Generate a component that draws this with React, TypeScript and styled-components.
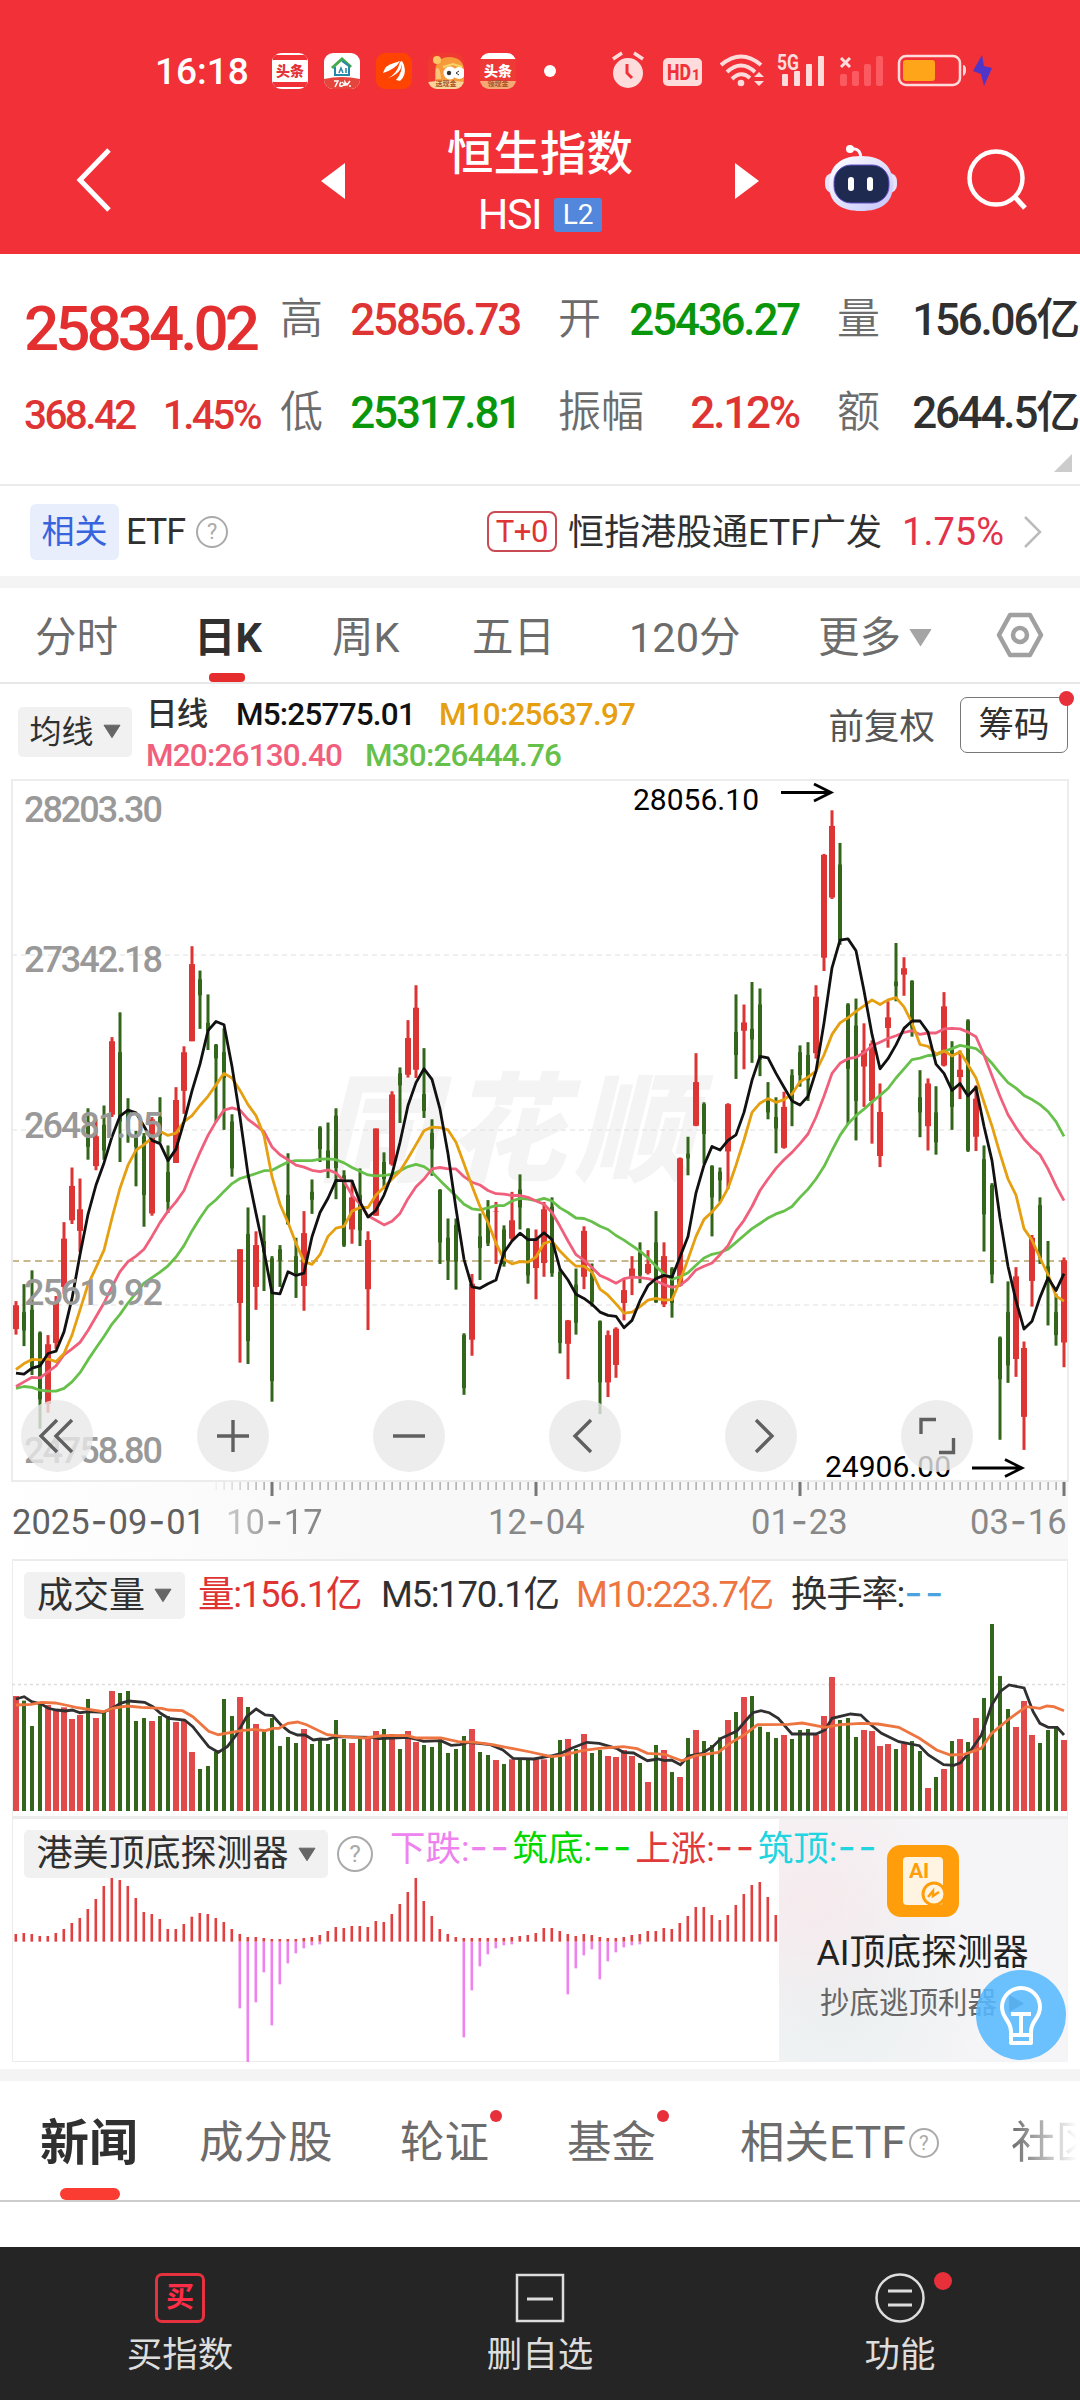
import { Fragment, FunctionComponent, useMemo } from "react";
import styled, { createGlobalStyle } from "styled-components";

const COLOR = {
  brand: "#f23038",
  up: "#df3434",
  down: "#0a960a",
  text: "#303030",
  gray: "#6c6c6c",
  barUp: "#dd3434",
  barDown: "#33661b",
};

type Candle = [up: 0 | 1, high: number, top: number, bottom: number, low: number];

const CANDLES: Candle[] = [
  [1, 1156, 1165, 1217, 1229], [0, 1119, 1180, 1220, 1254], [0, 1089, 1175, 1300, 1317], [0, 1222, 1225, 1370, 1434],
  [1, 1230, 1250, 1380, 1399], [1, 1145, 1158, 1247, 1260], [1, 984, 1020, 1125, 1140], [1, 865, 905, 980, 988],
  [1, 889, 956, 1003, 1049], [0, 736, 765, 820, 848], [1, 760, 797, 862, 871], [0, 730, 772, 828, 848],
  [1, 581, 590, 750, 755], [0, 527, 614, 765, 853], [0, 714, 738, 765, 811], [0, 785, 795, 820, 906],
  [0, 790, 797, 925, 994], [1, 755, 760, 965, 970], [0, 712, 755, 795, 810], [0, 817, 875, 940, 964],
  [1, 690, 718, 855, 855], [1, 601, 614, 698, 748], [1, 383, 422, 590, 590], [0, 436, 455, 490, 563],
  [0, 488, 550, 567, 609], [0, 596, 598, 627, 766], [0, 562, 614, 670, 783], [0, 749, 765, 867, 885],
  [1, 1043, 1043, 1160, 1290], [0, 952, 1010, 1243, 1293], [1, 1004, 1034, 1125, 1175], [0, 969, 1025, 1050, 1134],
  [0, 1058, 1063, 1330, 1375], [0, 1034, 1043, 1068, 1125], [0, 834, 925, 988, 990], [0, 1018, 1058, 1095, 1149],
  [1, 960, 1008, 1123, 1177], [0, 891, 918, 935, 966], [0, 775, 778, 825, 853], [0, 767, 828, 868, 888],
  [0, 736, 752, 866, 934], [0, 871, 882, 1035, 1038], [1, 893, 930, 1000, 1031], [0, 867, 925, 1002, 1036],
  [1, 1004, 1023, 1130, 1219], [1, 780, 780, 970, 970], [0, 832, 853, 890, 912], [1, 699, 706, 858, 861],
  [0, 647, 660, 686, 768], [1, 544, 583, 663, 669], [1, 468, 517, 652, 670], [0, 605, 705, 742, 757],
  [0, 760, 790, 825, 883], [0, 912, 914, 1028, 1075], [0, 976, 1018, 1068, 1110], [0, 976, 990, 1070, 1131],
  [0, 1226, 1230, 1345, 1360], [1, 1097, 1118, 1240, 1275], [0, 965, 1015, 1040, 1110], [0, 936, 958, 1030, 1036],
  [1, 940, 960, 961, 1075], [0, 991, 1000, 1075, 1081], [1, 918, 980, 1020, 1025], [0, 880, 913, 952, 1000],
  [0, 997, 999, 1100, 1118], [1, 1000, 1020, 1084, 1152], [1, 940, 956, 1073, 1103], [0, 930, 950, 1095, 1103],
  [0, 1085, 1092, 1247, 1270], [1, 1197, 1198, 1249, 1326], [0, 1085, 1120, 1203, 1229], [1, 993, 1003, 1103, 1130],
  [0, 1074, 1095, 1158, 1168], [0, 1198, 1200, 1333, 1402], [1, 1220, 1230, 1333, 1365], [1, 1213, 1216, 1295, 1323],
  [1, 1108, 1132, 1160, 1198], [1, 1058, 1085, 1105, 1143], [0, 1028, 1050, 1100, 1117], [1, 1045, 1075, 1095, 1098],
  [0, 960, 1028, 1158, 1160], [1, 1028, 1058, 1163, 1169], [0, 1082, 1085, 1160, 1192], [1, 843, 845, 1122, 1124],
  [0, 798, 835, 845, 882], [1, 616, 679, 774, 775], [0, 723, 727, 792, 857], [0, 860, 862, 930, 1015],
  [0, 865, 874, 893, 940], [1, 725, 727, 830, 912], [0, 488, 570, 620, 672], [1, 510, 549, 567, 651],
  [0, 461, 563, 586, 637], [0, 475, 510, 630, 666], [0, 679, 715, 745, 760], [0, 712, 755, 780, 834],
  [1, 700, 733, 822, 824], [0, 651, 664, 720, 775], [0, 599, 614, 664, 689], [0, 592, 620, 675, 720],
  [1, 468, 493, 616, 628], [1, 182, 184, 408, 437], [1, 87, 121, 277, 280], [0, 158, 205, 370, 380],
  [0, 507, 510, 650, 770], [0, 497, 556, 720, 806], [1, 551, 610, 645, 733], [1, 588, 595, 720, 813],
  [1, 682, 744, 840, 864], [1, 503, 538, 561, 604], [0, 376, 460, 470, 503], [1, 407, 431, 445, 491],
  [0, 457, 459, 560, 580], [0, 653, 712, 745, 799], [1, 671, 682, 775, 828], [0, 688, 745, 810, 837],
  [1, 483, 514, 643, 645], [0, 590, 605, 733, 783], [1, 610, 652, 668, 716], [0, 542, 545, 828, 831],
  [1, 686, 715, 798, 829], [0, 817, 847, 967, 1048], [0, 899, 903, 1098, 1117], [0, 1233, 1236, 1326, 1458],
  [0, 1113, 1180, 1296, 1334], [1, 1082, 1102, 1282, 1321], [1, 1244, 1258, 1408, 1480], [1, 1012, 1018, 1112, 1168],
  [0, 930, 947, 1062, 1075], [0, 1025, 1080, 1110, 1209], [0, 1140, 1180, 1230, 1253], [1, 1061, 1067, 1246, 1300],
];

const AVERAGES = [
  {
    color: "#66c04a",
    values: [
      1346, 1342, 1344, 1350, 1352, 1352, 1346, 1332, 1312, 1284, 1258, 1233, 1206, 1185, 1160, 1138, 1117, 1105, 1093, 1079,
      1060, 1035, 1003, 975, 950, 935, 917, 900, 889, 884, 878, 872, 871, 862, 853, 850, 850, 850, 847, 846, 848, 855, 865,
      873, 881, 883, 882, 880, 872, 863, 858, 863, 875, 893, 910, 927, 945, 955, 957, 953, 948, 948, 938, 932, 934, 937, 932,
      938, 953, 963, 975, 976, 983, 993, 1000, 1013, 1023, 1035, 1047, 1062, 1080, 1097, 1108, 1103, 1094, 1078, 1062, 1054,
      1050, 1043, 1028, 1013, 998, 987, 975, 966, 960, 950, 930, 912, 890, 863, 828, 795, 770, 752, 738, 722, 708, 693, 670,
      650, 630, 627, 621, 620, 612, 606, 599, 602, 606, 620, 638, 660, 680, 692, 708, 717, 728, 743, 765, 797,
    ],
  },
  {
    color: "#f0607c",
    values: [
      1342, 1332, 1322, 1323, 1310, 1297, 1273, 1260, 1246, 1220, 1190, 1160, 1125, 1092, 1070, 1058, 1043, 1015, 985, 960,
      940, 915, 872, 832, 795, 765, 740, 735, 740, 760, 773, 787, 820, 837, 848, 860, 864, 871, 874, 870, 877, 895, 925, 945,
      970, 980, 990, 982, 965, 933, 907, 890, 868, 865, 868, 868, 885, 897, 903, 915, 922, 923, 926, 926, 930, 938, 945, 963,
      993, 1025, 1055, 1067, 1083, 1100, 1108, 1117, 1107, 1104, 1105, 1107, 1112, 1120, 1126, 1122, 1108, 1088, 1080, 1073,
      1055, 1035, 1003, 980, 950, 915, 890, 867, 848, 832, 813, 792, 755, 710, 660, 638, 628, 625, 615, 600, 592, 584, 578,
      571, 567, 575, 572, 572, 563, 562, 563, 570, 580, 620, 665, 710, 750, 778, 803, 822, 837, 868, 905, 937,
    ],
  },
  {
    color: "#e59f10",
    values: [
      1305, 1292, 1283, 1284, 1282, 1288, 1270, 1230, 1175, 1120, 1083, 1045, 975, 910, 860, 827, 815, 800, 786, 795, 790,
      765, 752, 730, 710, 685, 660, 670, 697, 728, 752, 795, 885, 945, 985, 1030, 1070, 1076, 1055, 1015, 997, 993, 960, 952,
      952, 925, 908, 890, 873, 845, 815, 785, 777, 778, 783, 810, 857, 905, 950, 985, 1030, 1065, 1075, 1070, 1071, 1060,
      1030, 1025, 1047, 1065, 1080, 1080, 1093, 1130, 1143, 1162, 1182, 1180, 1168, 1154, 1150, 1154, 1153, 1112, 1065, 1015,
      978, 962, 942, 910, 860, 805, 745, 725, 715, 723, 717, 705, 678, 668, 655, 620, 575, 550, 539, 525, 513, 500, 510, 500,
      495, 515, 550, 597, 601, 618, 611, 622, 613, 641, 670, 723, 775, 835, 890, 925, 998, 1023, 1062, 1098, 1145, 1156,
    ],
  },
  {
    color: "#111",
    values: [
      1313, 1315, 1302, 1297, 1270, 1265, 1223, 1150, 1055, 967, 903, 855, 798, 753, 740, 746, 775, 806, 813, 850, 825, 765,
      698, 640, 567, 547, 554, 645, 755, 880, 965, 1047, 1138, 1140, 1092, 1100, 1095, 1016, 963, 932, 893, 894, 894, 940,
      973, 958, 925, 880, 810, 730, 680, 650, 673, 738, 835, 955, 1065, 1125, 1128, 1118, 1110, 1050, 1025, 1008, 1022, 1022,
      1007, 1022, 1086, 1110, 1141, 1150, 1163, 1180, 1187, 1189, 1214, 1198, 1155, 1122, 1107, 1100, 1104, 1060, 1015, 920,
      860, 819, 827, 806, 794, 745, 675, 623, 626, 660, 690, 720, 729, 710, 655, 550, 430, 370, 367, 393, 480, 575, 650, 628,
      598, 562, 546, 546, 570, 640, 660, 697, 682, 709, 690, 775, 850, 975, 1080, 1155, 1217, 1200, 1148, 1105, 1133, 1096,
    ],
  },
];

// volume bars: top edge, three units per pixel, base line at 633
const VOLUMES = [
  288, 302, 378, 310, 315, 328, 322, 357, 345, 297, 354, 338, 273, 279, 273, 363, 354, 363, 348, 348, 366, 362, 456, 507,
  498, 455, 297, 348, 291, 321, 372, 395, 354, 438, 411, 429, 387, 432, 415, 432, 360, 417, 429, 414, 412, 393, 387, 402,
  447, 393, 426, 435, 441, 412, 459, 447, 408, 387, 456, 465, 480, 492, 478, 475, 480, 478, 478, 465, 420, 417, 447, 402,
  459, 450, 468, 471, 450, 468, 489, 546, 435, 450, 516, 531, 414, 390, 423, 435, 412, 360, 336, 291, 288, 380, 396, 414,
  405, 417, 390, 387, 405, 348, 231, 360, 354, 411, 390, 393, 438, 432, 447, 430, 423, 453, 564, 531, 507, 423, 417, 426,
  354, 294, 72, 228, 327, 381, 303, 405, 429, 390, 384, 420,
];

const VOLUME_M5 =
  "23,297 35,290 46,305 60,312 70,325 82,330 95,333 105,330 116,338 128,335 150,337 163,325 175,310 187,303 210,307 222,320 233,340 245,355 268,360 280,380 303,440 317,457 330,440 343,405 358,350 372,327 385,345 396,347 408,375 420,395 432,405 443,405 455,420 465,417 475,418 488,410 540,412 550,416 570,414 592,412 605,418 615,424 640,422 655,436 668,434 680,427 712,434 730,450 745,475 775,477 800,468 815,460 830,445 852,427 870,430 895,445 905,457 920,459 940,482 955,477 965,482 975,480 988,494 1000,468 1020,460 1035,440 1047,415 1070,393 1085,357 1093,338 1105,332 1117,338 1130,355 1150,402 1185,402 1198,390 1208,355 1235,342 1250,345 1265,375 1280,400 1305,425 1335,437 1348,465 1370,494 1385,496 1395,488 1410,450 1425,405 1440,315 1452,275 1465,255 1487,264 1500,335 1510,370 1522,382 1535,382 1545,405";
const VOLUME_M10 =
  "23,315 45,313 60,307 80,309 95,315 110,322 150,335 165,324 185,318 205,322 235,325 245,330 265,332 280,350 303,394 317,404 350,392 370,388 385,392 396,385 405,385 418,370 432,366 445,374 475,404 500,410 530,414 555,407 590,406 605,414 640,414 665,425 690,427 715,434 745,446 770,456 800,470 815,467 845,452 870,445 905,440 925,446 940,460 965,463 990,482 1010,467 1043,457 1060,430 1080,405 1100,374 1145,373 1165,369 1198,382 1220,374 1250,370 1275,372 1305,382 1335,415 1360,450 1380,465 1400,463 1425,445 1440,400 1465,357 1490,320 1510,325 1520,318 1530,320 1545,332";

const DETECTOR_UP = [
  402, 399, 402, 408, 408, 399, 387, 369, 354, 327, 297, 258, 212, 240, 258, 294, 336, 342, 357, 387, 387, 372, 350, 339,
  342, 354, 366, 387, 402, 411, 411, 414, 417, 417, 417, 417, 414, 411, 405, 393, 381, 384, 378, 378, 381, 363, 366, 342,
  312, 276, 234, 303, 348, 387, 402, 411, 414, 414, 414, 414, 414, 414, 411, 408, 405, 399, 384, 384, 393, 402, 408, 402,
  405, 411, 414, 414, 411, 405, 402, 393, 393, 384, 387, 369, 348, 321, 321, 345, 360, 345, 315, 282, 255, 246, 291, 345,
];
const DETECTOR_DOWN: [number, number[]][] = [
  [28, [624, 786, 606, 516, 675, 552, 489, 459, 444, 435, 432]],
  [56, [711, 570, 498, 462, 444, 435, 432]],
  [69, [582, 504, 465, 447, 537, 483, 456, 441, 435, 432]],
];

const STEP = 8;
const candleX = (index: number) => 4 + index * STEP;
const priceY = (value: number) => (value - 21) / 2.178;
const scalePoints = (points: string) =>
  points
    .split(" ")
    .map((point) => {
      const [x, y] = point.split(",").map(Number);
      return `${(x / 1.452 - 12).toFixed(1)},${(y / 3 + 41).toFixed(1)}`;
    })
    .join(" ");

const PriceChart: FunctionComponent = () => {
  const lines = useMemo(
    () =>
      AVERAGES.map(({ color, values }) => (
        <polyline
          key={color}
          points={values.map((v, i) => `${candleX(i)},${priceY(v).toFixed(1)}`).join(" ")}
          fill="none"
          stroke={color}
          strokeWidth={2.8}
          strokeLinejoin="round"
        />
      )),
    []
  );

  return (
    <PlotSvg width="1056" height="701" viewBox="0 0 1056 701">
      <Watermark x="306" y="392" textLength="375">同花顺</Watermark>
      {[175, 350, 525].map((y) => (
        <line key={y} x1="0" x2="1056" y1={y} y2={y} stroke="#e0e0e0" strokeDasharray="5 4" />
      ))}
      <line x1="0" x2="1056" y1="481" y2="481" stroke="#b9a06a" strokeWidth="1.6" strokeDasharray="7 4.5" />
      {CANDLES.map(([up, high, top, bottom, low], i) => (
        <g key={i} fill={up ? COLOR.barUp : COLOR.barDown}>
          <rect x={candleX(i) - 1.5} y={priceY(high)} width="3" height={priceY(low) - priceY(high)} />
          <rect
            x={candleX(i) - (up ? 3 : 2)}
            y={priceY(top)}
            width={up ? 6 : 4}
            height={priceY(bottom) - priceY(top)}
          />
        </g>
      ))}
      {lines}
      <ScaleText x="12" y="42" textLength="139">28203.30</ScaleText>
      <ScaleText x="12" y="192" textLength="139">27342.18</ScaleText>
      <ScaleText x="12" y="358" textLength="139">26481.05</ScaleText>
      <ScaleText x="12" y="525" textLength="139">25619.92</ScaleText>
      <ScaleText x="12" y="683" textLength="139">24758.80</ScaleText>
      <MarkText x="621" y="30" textLength="126">28056.10</MarkText>
      <MarkText x="813" y="697" textLength="126">24906.00</MarkText>
      <g fill="none" stroke="#000" strokeWidth="2.8">
        <path d="M769 12.500H819M802 4L819 12.500L802 21" />
        <path d="M960 688H1010M993 679.500L1010 688L993 696.500" />
      </g>
    </PlotSvg>
  );
};

const VolumeChart: FunctionComponent = () => (
  <PanelSvg width="1056" height="258" viewBox="0 0 1056 258">
    <line x1="0" x2="1056" y1="125.500" y2="125.500" stroke="#ddd" strokeWidth="1.5" strokeDasharray="3 3" />
    {VOLUMES.map((top, i) => {
      const up = CANDLES[i][0];
      return (
        <rect
          key={i}
          x={candleX(i) - (up ? 3 : 2)}
          y={top / 3 + 41}
          width={up ? 6 : 4}
          height={(633 - top) / 3}
          fill={up ? "#e04a4a" : COLOR.barDown}
        />
      );
    })}
    <polyline points={scalePoints(VOLUME_M5)} fill="none" stroke="#303030" strokeWidth="2.8" />
    <polyline points={scalePoints(VOLUME_M10)} fill="none" stroke="#ee7440" strokeWidth="2.8" />
  </PanelSvg>
);

const DetectorChart: FunctionComponent = () => (
  <PanelSvg width="768" height="245" viewBox="0 0 768 245">
    {DETECTOR_UP.map((top, i) => (
      <rect key={i} x={candleX(i) - 1.5} y={top / 3 - 17} width="2.6" height={(425 - top) / 3} fill="#e04040" />
    ))}
    {DETECTOR_DOWN.map(([start, values]) =>
      values.map((bottom, i) => (
        <rect key={start + i} x={candleX(start + i) - 1.5} y="125" width="2.6" height={(bottom - 425) / 3} fill="#ee82ee" />
      ))
    )}
  </PanelSvg>
);

const TimeAxis: FunctionComponent = () => (
  <Axis>
    <svg width="1060" height="16" viewBox="0 0 1060 16">
      {Array.from({ length: 107 }, (_, i) => {
        const x = 204 + i * STEP;
        const major = (x - 260) % 264 === 0;
        return (
          <rect
            key={x}
            x={major ? x - 1.5 : x - 0.5}
            y="0"
            width={major ? 3 : 1.2}
            height={major ? 15 : 9}
            fill={major ? "#777" : "#999"}
            opacity={Math.min(1, (i + 1) / 7)}
          />
        );
      })}
    </svg>
    <AxisLabels>
      <StartDate><Dashed text="2025-09-01" /></StartDate>
      <FadedDate><Dashed text="10-17" /></FadedDate>
      <span><Dashed text="12-04" /></span>
      <span><Dashed text="01-23" /></span>
      <span><Dashed text="03-16" /></span>
    </AxisLabels>
  </Axis>
);

const Dashed: FunctionComponent<{ text: string }> = ({ text }) => (
  <>
    {text.split("-").map((part, i) => (
      <Fragment key={i}>
        {i > 0 && <Dash>-</Dash>}
        {part}
      </Fragment>
    ))}
  </>
);

const Caret: FunctionComponent<{ size?: number; color?: string }> = ({ size = 18, color = "#666" }) => (
  <svg width={size} height={size * 0.8} viewBox="0 0 18 14">
    <path d="M1 1H17L9 13.500Z" fill={color} stroke={color} strokeLinejoin="round" />
  </svg>
);

const Help: FunctionComponent<{ size: number }> = ({ size }) => <HelpMark $size={size}>?</HelpMark>;

const AppIcons: FunctionComponent = () => (
  <IconRow>
    <AppIcon $bg="#f23038">
      <TileBand>头条</TileBand>
    </AppIcon>
    <AppIcon $bg="#fff">
      <svg width="36" height="36" viewBox="0 0 36 36" fill="none">
        <path d="M8 15L18 6L27 14" stroke="#45a84a" strokeWidth="3" />
        <path d="M11 14V22H25V13L18 8" stroke="#2389a8" strokeWidth="2" />
        <path d="M15 20L17 15L19 20M22 15V20" stroke="#2389a8" strokeWidth="1.500" />
        <path d="M0 26Q18 22 36 26V36H0Z" fill="#e4453c" />
        <path d="M10 28H14L11 34M17 29Q14 34 18 33T18 29M21 33V29L23 32L26 28M25 33H27" stroke="#fff" strokeWidth="1.500" />
      </svg>
    </AppIcon>
    <AppIcon $bg="#fe4400">
      <svg width="36" height="36" viewBox="0 0 36 36" fill="#fff">
        <path d="M7 20Q9 12 18 10L24 8Q20 16 7 20Z" />
        <path d="M12 25Q21 21 24 9L26 8Q27 20 12 25Z" />
        <path d="M20 27Q27 19 26 8L28 12Q31 22 24 28Z" />
      </svg>
    </AppIcon>
    <AppIcon $bg="#ef3a31">
      <svg width="36" height="36" viewBox="0 0 36 36">
        <path d="M7 36V20Q7 4 22 4Q36 5 36 18V36Z" fill="#f79a3c" />
        <circle cx="9" cy="7" r="4" fill="#fbc766" />
        <path d="M8 16Q12 12 13 26H8Z" fill="#fcc67a" />
        <path d="M15 14L25 11L34 14" stroke="#f7d56a" strokeWidth="2" fill="none" />
        <circle cx="22" cy="20" r="6.500" fill="#fff" />
        <circle cx="31" cy="20" r="6" fill="#fff" />
        <circle cx="21" cy="20" r="2.200" fill="#333" />
        <path d="M31 18L28 20L31 22" stroke="#333" fill="none" />
        <path d="M0 29Q18 26 36 29V36H0Z" fill="#f9d59a" />
      </svg>
      <TileFoot>送现金</TileFoot>
    </AppIcon>
    <AppIcon $bg="#ee3a37">
      <TileCap />
      <TileWord>头条</TileWord>
      <TileFoot $bg="#f5a873">领现金</TileFoot>
    </AppIcon>
    <NoticeDot />
  </IconRow>
);

const SystemIcons: FunctionComponent = () => (
  <svg width="386" height="42" viewBox="0 0 386 42" fill="#ffdcdc">
    <circle cx="17" cy="23" r="15" />
    <path d="M2 9L11 3M23 3L32 9" stroke="#ffdcdc" strokeWidth="3.500" />
    <path d="M16 14V23L21 28" stroke={COLOR.brand} strokeWidth="3" fill="none" />
    <rect x="52" y="8" width="39" height="28" rx="5" />
    <HdText x="56" y="30" fontSize="22" textLength="24" lengthAdjust="spacingAndGlyphs">HD</HdText>
    <HdText x="81" y="30" fontSize="14">1</HdText>
    <g fill="none" stroke="#ffdcdc" strokeWidth="4">
      <path d="M110 15Q130 -2 150 15" />
      <path d="M116 22Q130 9 144 22" />
      <path d="M121 29Q130 20 139 28" />
    </g>
    <circle cx="130" cy="33" r="3.300" />
    <path d="M143 27L148 22L153 27ZM143 31L148 36L153 31Z" />
    <NetText x="166" y="20" textLength="22" lengthAdjust="spacingAndGlyphs">5G</NetText>
    <rect x="171" y="24" width="6" height="12" rx="1" />
    <rect x="183" y="21" width="6" height="15" rx="1" />
    <rect x="195" y="14" width="6" height="22" rx="1" />
    <rect x="207" y="6" width="6" height="30" rx="1" />
    <path d="M230 8L239 17M239 8L230 17" stroke="#ffdcdc" strokeWidth="3" />
    <g fill="#fa5a60">
      <rect x="229" y="24" width="7" height="12" rx="2" />
      <rect x="241" y="21" width="7" height="15" rx="2" />
      <rect x="253" y="14" width="7" height="22" rx="2" />
      <rect x="265" y="6" width="7" height="30" rx="2" />
    </g>
    <rect x="288" y="6" width="61" height="29" rx="7" fill="none" stroke="#ffdcdc" strokeWidth="2.500" />
    <rect x="292" y="10" width="32" height="21" rx="3" fill="#ffa51a" />
    <path d="M352 15Q355 15 355 20T352 26Z" />
    <path d="M371 5L362 21L370 24L373 36L381 18L373 16Z" fill="#5036c8" />
  </svg>
);

const Robot: FunctionComponent = () => (
  <svg width="74" height="70" viewBox="0 0 74 70">
    <defs>
      <linearGradient id="shell" x1="0" y1="0" x2="1" y2="1">
        <stop offset="0" stopColor="#ffffff" />
        <stop offset="1" stopColor="#c5c4fa" />
      </linearGradient>
    </defs>
    <path d="M27 6Q37 4 37 17" fill="none" stroke="#f8f6ff" strokeWidth="3" />
    <circle cx="26" cy="6" r="4" fill="#fff" />
    <rect x="1" y="30" width="72" height="20" rx="8" fill="#e6e2fb" />
    <path d="M37 13C61 13 69 26 69 42C69 60 57 68 37 68S5 60 5 42C5 26 13 13 37 13Z" fill="url(#shell)" />
    <rect x="10" y="22" width="55" height="38" rx="17" fill="#1f2a50" stroke="#6450c8" />
    <rect x="24" y="34" width="6" height="14" rx="3" fill="#fff" />
    <rect x="43" y="34" width="6" height="14" rx="3" fill="#fff" />
  </svg>
);

const App: FunctionComponent = () => (
  <Screen>
    <GlobalStyle />
    <Header>
      <StatusBar>
        <Clock>16:18</Clock>
        <AppIcons />
        <SystemIcons />
      </StatusBar>
      <NavBar>
        <svg width="36" height="66" viewBox="0 0 36 66">
          <path d="M33 3L4 33L33 63" fill="none" stroke="#fff" strokeWidth="5" />
        </svg>
        <TitleGroup>
          <svg width="24" height="36" viewBox="0 0 24 36"><path d="M24 0V36L0 18Z" fill="#fff" /></svg>
          <Title>
            <Name>恒生指数</Name>
            <Code>HSI<Level>L2</Level></Code>
          </Title>
          <svg width="24" height="36" viewBox="0 0 24 36"><path d="M0 0V36L24 18Z" fill="#fff" /></svg>
        </TitleGroup>
        <Robot />
        <svg width="62" height="62" viewBox="0 0 62 62">
          <circle cx="30" cy="29" r="26.500" fill="none" stroke="#fff" strokeWidth="4.500" />
          <path d="M48 47L59 59" stroke="#fff" strokeWidth="5" />
        </svg>
      </NavBar>
    </Header>

    <Quote>
      <LastPrice>25834.02</LastPrice>
      <Pair><Label>高</Label><Value $color={COLOR.up}>25856.73</Value></Pair>
      <Pair><Label>开</Label><Value $color={COLOR.down}>25436.27</Value></Pair>
      <Pair><Label>量</Label><Value>156.06亿</Value></Pair>
      <Change><span>368.42</span><span>1.45%</span></Change>
      <Pair><Label>低</Label><Value $color={COLOR.down}>25317.81</Value></Pair>
      <Pair><Label>振幅</Label><Value $color={COLOR.up}>2.12%</Value></Pair>
      <Pair><Label>额</Label><Value>2644.5亿</Value></Pair>
      <Corner />
    </Quote>

    <EtfRow>
      <RelatedTag>相关</RelatedTag>
      <EtfWord>ETF</EtfWord>
      <Help size={32} />
      <TradeTag>T+0</TradeTag>
      <FundName>恒指港股通ETF广发</FundName>
      <FundChange>1.75%</FundChange>
      <svg width="22" height="36" viewBox="0 0 22 36">
        <path d="M3 3L18 18L3 33" fill="none" stroke="#bbb" strokeWidth="2.500" />
      </svg>
    </EtfRow>
    <Gap $height={12} />

    <PeriodTabs>
      <Period>分时</Period>
      <Period $active>日K</Period>
      <Period>周K</Period>
      <Period>五日</Period>
      <Period>120分</Period>
      <Period>更多<Caret size={23} color="#a5a5a5" /></Period>
      <svg width="48" height="46" viewBox="0 0 48 46" fill="none" stroke="#a0a0a0" strokeWidth="4.500">
        <path d="M14 3H34L45 23L34 43H14L3 23Z" strokeLinejoin="round" />
        <circle cx="24" cy="23" r="7" />
      </svg>
    </PeriodTabs>

    <LegendRow>
      <Picker $width={114} $height={50} $size={32}>均线<Caret /></Picker>
      <Legend>
        <LegendItem $width={90} $color="#303030">日线</LegendItem>
        <LegendItem $width={203} $color="#111">M5:25775.01</LegendItem>
        <LegendItem $color="#e59f10">M10:25637.97</LegendItem>
        <LegendBreak />
        <LegendItem $width={219} $color="#f0607c">M20:26130.40</LegendItem>
        <LegendItem $color="#66c04a">M30:26444.76</LegendItem>
      </Legend>
      <Adjust>前复权</Adjust>
      <Chips>筹码<Badge $top={-7} $right={-7} $size={15} /></Chips>
    </LegendRow>

    <Plot>
      <PriceChart />
      <Controls>
        <Control><path d="M36 20L20 36L36 52M51 20L35 36L51 52" /></Control>
        <Control><path d="M20 36H52M36 20V52" /></Control>
        <Control><path d="M20 36H52" /></Control>
        <Control><path d="M42 20L26 36L42 52" /></Control>
        <Control><path d="M31 20L47 36L31 52" /></Control>
        <Control><path d="M20 34V19.500H35M38 52.500H52.500V38" /></Control>
      </Controls>
    </Plot>
    <TimeAxis />

    <VolumePanel>
      <VolumeChart />
      <PanelHead $top={11}>
        <Picker $width={161} $height={47} $size={36}>成交量<Caret /></Picker>
        <Metric $left={13} $width={183} $color={COLOR.up}>量:156.1亿</Metric>
        <Metric $width={195} $color="#303030">M5:170.1亿</Metric>
        <Metric $width={215} $color="#ee7440">M10:223.7亿</Metric>
        <Metric $color="#303030">换手率:<Blank $color="#4aa3e0">--</Blank></Metric>
      </PanelHead>
    </VolumePanel>

    <DetectorPanel>
      <DetectorChart />
      <Promo>
        <svg width="72" height="72" viewBox="0 0 72 72">
          <rect width="72" height="72" rx="14" fill="#ff9d0a" />
          <rect x="16" y="12" width="40" height="48" rx="4" fill="#fff4e2" />
          <AiText x="22" y="33">AI</AiText>
          <circle cx="47" cy="49" r="11" fill="#fff4e2" stroke="#ff9d0a" strokeWidth="3" />
          <path d="M41 52L46 46V51L52 47" fill="none" stroke="#ff9d0a" strokeWidth="2.500" />
        </svg>
        <PromoTitle>AI顶底探测器</PromoTitle>
        <PromoNote>抄底逃顶利器<span>▶</span></PromoNote>
      </Promo>
      <PanelHead $top={11}>
        <Picker $width={304} $height={48} $size={36}>港美顶底探测器<Caret /></Picker>
        <HelpSlot><Help size={36} /></HelpSlot>
        <Signal $color="#ee82ee">下跌:<Blank>--</Blank></Signal>
        <Signal $color="#00d800">筑底:<Blank>--</Blank></Signal>
        <Signal $color="#e03a3a">上涨:<Blank>--</Blank></Signal>
        <Signal $color="#22d3e0">筑顶:<Blank>--</Blank></Signal>
      </PanelHead>
      <TipBubble>
        <svg width="90" height="90" viewBox="0 0 90 90" fill="none" stroke="#fff" strokeWidth="4">
          <path d="M35 62C35 50 26 49 26 37A19 19 0 0 1 64 37C64 49 55 50 55 62V73H35Z" strokeLinejoin="round" />
          <path d="M35 65H55M45 64V44M35 44H55" />
        </svg>
      </TipBubble>
    </DetectorPanel>
    <Gap $height={12} />

    <NewsTabs>
      <NewsTab $width={159} $active>新闻</NewsTab>
      <NewsTab $width={201}>成分股</NewsTab>
      <NewsTab $width={167}><Marked>轮证<Badge $top={-11} $right={-13} $size={12} /></Marked></NewsTab>
      <NewsTab $width={173}><Marked>基金<Badge $top={-11} $right={-13} $size={12} /></Marked></NewsTab>
      <NewsTab $width={271}>相关ETF<Help size={30} /></NewsTab>
      <NewsTab $faded $width={88}>社区</NewsTab>
    </NewsTabs>
    <NewsBody />

    <BottomBar>
      <Action>
        <BuyIcon>买</BuyIcon>
        买指数
      </Action>
      <Action>
        <svg width="50" height="50" viewBox="0 0 50 50" fill="none" stroke="#ddd" strokeWidth="2.500">
          <rect x="2" y="2" width="46" height="46" />
          <path d="M12 26H38" strokeWidth="3" />
        </svg>
        删自选
      </Action>
      <Action>
        <Marked>
          <svg width="52" height="50" viewBox="0 0 52 50" fill="none" stroke="#ddd" strokeWidth="2.500">
            <circle cx="26" cy="25" r="23.500" />
            <path d="M14 18H38M14 32H38" strokeWidth="3" />
          </svg>
          <Badge $top={-1} $right={-26} $size={18} />
        </Marked>
        功能
      </Action>
    </BottomBar>
  </Screen>
);

const GlobalStyle = createGlobalStyle`
  body {
    margin: 0;
    background: #fff;
  }
  * {
    box-sizing: border-box;
  }
  svg {
    display: block;
    flex: none;
  }
`;

const Screen = styled.div`
  width: 1080px;
  height: 2400px;
  overflow: hidden;
  display: flex;
  flex-direction: column;
  background: #fff;
  color: ${COLOR.text};
  font-family: Roboto, "Noto Sans CJK SC", sans-serif;
  line-height: 1;
  white-space: nowrap;
`;

const Header = styled.header`
  height: 254px;
  flex: none;
  padding-top: 50px;
  background: ${COLOR.brand};
  color: #fff;
`;

const StatusBar = styled.div`
  display: flex;
  align-items: center;
  height: 42px;
  padding-left: 155px;
`;

const Clock = styled.span`
  width: 117px;
  font-size: 37px;
  font-weight: 500;
`;

const IconRow = styled.div`
  display: flex;
  align-items: center;
  gap: 16px;
  width: 339px;
`;

const AppIcon = styled.div<{ $bg: string }>`
  position: relative;
  display: flex;
  align-items: center;
  justify-content: center;
  width: 36px;
  height: 36px;
  border-radius: 9px;
  overflow: hidden;
  background: ${({ $bg }) => $bg};
`;

const TileBand = styled.span`
  display: flex;
  align-items: center;
  height: 22px;
  padding: 0 4px;
  border-radius: 2px;
  background: #fff;
  color: #e2333a;
  font-size: 14px;
  font-weight: 900;
  box-shadow: 0 -6px 0 -1px #f23038, 0 -7px 0 0 #fff, 0 6px 0 -1px #f23038, 0 7px 0 0 #fff;
`;

const TileWord = styled.span`
  font-size: 14px;
  font-weight: 900;
`;

const TileCap = styled.span`
  position: absolute;
  top: 0;
  left: 0;
  width: 36px;
  height: 6px;
  background: #fff;
`;

const TileFoot = styled.span<{ $bg?: string }>`
  position: absolute;
  left: 0;
  bottom: 0;
  width: 36px;
  height: 8px;
  background: ${({ $bg = "transparent" }) => $bg};
  color: #a5542a;
  font-size: 7px;
  font-weight: 700;
  text-align: center;
`;

const NoticeDot = styled.span`
  width: 12px;
  height: 12px;
  margin-left: 12px;
  border-radius: 50%;
  background: #fff;
`;

const HdText = styled.text`
  font-weight: 800;
  fill: ${COLOR.brand};
`;

const NetText = styled.text`
  font-size: 22px;
  font-weight: 700;
`;

const NavBar = styled.div`
  display: flex;
  align-items: center;
  height: 162px;
  padding: 13px 0 0 76px;
`;

const TitleGroup = styled.div`
  display: flex;
  align-items: center;
  justify-content: space-between;
  width: 438px;
  margin: 3px 65px 0 209px;

  & + svg {
    margin: -3px 68px 0 0;
  }
`;

const Title = styled.div`
  display: flex;
  flex-direction: column;
  align-items: center;
  margin-top: 5px;
`;

const Name = styled.h1`
  margin: 0;
  font-size: 46.5px;
  font-weight: 500;
`;

const Code = styled.div`
  display: flex;
  align-items: center;
  gap: 13px;
  margin-top: 16px;
  font-size: 43px;
  letter-spacing: -1.5px;
`;

const Level = styled.span`
  display: flex;
  align-items: center;
  justify-content: center;
  width: 48px;
  height: 34px;
  border-radius: 3px;
  background: #5387dc;
  font-size: 28px;
  letter-spacing: 0;
`;

const Quote = styled.section`
  position: relative;
  display: grid;
  grid-template-columns: 218px 240px 241px 241px;
  grid-template-rows: 93px 93px;
  column-gap: 38px;
  align-items: center;
  height: 232px;
  flex: none;
  padding: 19px 0 0 24px;
  border-bottom: 2px solid #ebebeb;
`;

const LastPrice = styled.strong`
  padding-top: 18px;
  color: #e32f2f;
  font-size: 62px;
  font-weight: 500;
  letter-spacing: -4px;
`;

const Change = styled.div`
  display: flex;
  gap: 28px;
  padding-top: 6px;
  color: ${COLOR.up};
  font-size: 40.5px;
  font-weight: 500;
  letter-spacing: -2.6px;
`;

const Pair = styled.div`
  display: flex;
  align-items: center;
  justify-content: space-between;
`;

const Label = styled.span`
  color: ${COLOR.gray};
  font-size: 43px;
  font-weight: 350;
`;

const Value = styled.span<{ $color?: string }>`
  color: ${({ $color = COLOR.text }) => $color};
  font-size: 44px;
  font-weight: 500;
  letter-spacing: -2.2px;
`;

const Corner = styled.i`
  position: absolute;
  right: 8px;
  bottom: 12px;
  border-left: 18px solid transparent;
  border-bottom: 18px solid #ccc;
`;

const EtfRow = styled.section`
  display: flex;
  align-items: center;
  height: 90px;
  flex: none;
  padding: 1px 36px 0 30px;
`;

const RelatedTag = styled.span`
  display: flex;
  align-items: center;
  justify-content: center;
  width: 89px;
  height: 56px;
  margin-right: 7px;
  border-radius: 6px;
  background: #e8eefc;
  color: #3763dc;
  font-size: 33px;
`;

const EtfWord = styled.span`
  margin: 1px 11px 0 0;
  font-size: 36px;
  letter-spacing: -1px;
`;

const HelpMark = styled.span<{ $size: number }>`
  display: inline-flex;
  align-items: center;
  justify-content: center;
  width: ${({ $size }) => $size}px;
  height: ${({ $size }) => $size}px;
  border: 2px solid #aaa;
  border-radius: 50%;
  color: #aaa;
  font-size: ${({ $size }) => $size * 0.68}px;
`;

const TradeTag = styled.span`
  display: flex;
  align-items: center;
  justify-content: center;
  width: 70px;
  height: 41px;
  margin: 0 11px 0 auto;
  border: 2px solid #c94a52;
  border-radius: 8px;
  color: ${COLOR.up};
  font-size: 31px;
  letter-spacing: -0.5px;
`;

const FundName = styled.span`
  margin-top: 3px;
  font-size: 36px;
`;

const FundChange = styled.span`
  margin: 1px 18px 0 20px;
  color: #e2334a;
  font-size: 38px;
`;

const Gap = styled.div<{ $height: number }>`
  height: ${({ $height }) => $height}px;
  flex: none;
  background: #f4f4f4;
`;

const PeriodTabs = styled.nav`
  display: grid;
  grid-template-columns: 159px 138px 140px 157px 189px 178px 48px;
  align-items: center;
  height: 96px;
  flex: none;
  padding-left: 35px;
  border-bottom: 2px solid #e8e8e8;
`;

const Period = styled.span<{ $active?: boolean }>`
  position: relative;
  display: flex;
  align-items: center;
  gap: 8px;
  width: max-content;
  height: 100%;
  padding-top: 5px;
  color: ${({ $active }) => ($active ? COLOR.text : COLOR.gray)};
  font-size: 41.5px;
  font-weight: ${({ $active }) => ($active ? 700 : 400)};

  &::after {
    content: "";
    display: ${({ $active }) => ($active ? "block" : "none")};
    position: absolute;
    left: calc(50% - 19px);
    bottom: 0;
    width: 36px;
    height: 9px;
    border-radius: 4px;
    background: #e52d2d;
  }
`;

const LegendRow = styled.section`
  display: flex;
  align-items: center;
  height: 95px;
  flex: none;
  padding: 0 12px 0 18px;
`;

const Picker = styled.div<{ $width: number; $height: number; $size: number }>`
  display: flex;
  align-items: center;
  justify-content: center;
  gap: 9px;
  flex: none;
  width: ${({ $width }) => $width}px;
  height: ${({ $height }) => $height}px;
  border-radius: 5px;
  background: #f1f1f1;
  font-size: ${({ $size }) => $size}px;
`;

const Legend = styled.div`
  display: flex;
  flex-wrap: wrap;
  width: 510px;
  margin: 6px 0 0 14px;
  line-height: 41px;
`;

const LegendItem = styled.span<{ $color: string; $width?: number }>`
  width: ${({ $width }) => ($width ? `${$width}px` : "auto")};
  color: ${({ $color }) => $color};
  font-size: 31.5px;
  font-weight: 500;
  letter-spacing: -0.8px;
`;

const LegendBreak = styled.i`
  flex-basis: 100%;
  height: 0;
`;

const Adjust = styled.span`
  margin: -7px 25px 0 auto;
  color: #555;
  font-size: 35.5px;
`;

const Chips = styled.span`
  position: relative;
  display: flex;
  align-items: center;
  justify-content: center;
  width: 108px;
  height: 56px;
  padding-top: 2px;
  margin-top: -14px;
  border: 1.5px solid #777;
  border-radius: 7px;
  font-size: 35.5px;
`;

const Badge = styled.i<{ $top: number; $right: number; $size: number }>`
  position: absolute;
  top: ${({ $top }) => $top}px;
  right: ${({ $right }) => $right}px;
  width: ${({ $size }) => $size}px;
  height: ${({ $size }) => $size}px;
  border-radius: 50%;
  background: #e8303a;
`;

const Plot = styled.section`
  position: relative;
  height: 701px;
  flex: none;
  margin: 1px 12px 0;
  outline: 2px solid #ececec;
  outline-offset: -1px;
`;

const PlotSvg = styled.svg`
  overflow: visible;
`;

const Watermark = styled.text`
  fill: #f4f4f4;
  font-size: 118px;
  font-style: italic;
  font-weight: 900;
`;

const ScaleText = styled.text`
  fill: #999;
  font-size: 36px;
  font-weight: 500;
`;

const MarkText = styled.text`
  fill: #000;
  font-size: 30px;
`;

const Controls = styled.div`
  position: absolute;
  left: 9px;
  bottom: 9px;
  display: flex;
  justify-content: space-between;
  width: 952px;
`;

const Control = styled.svg.attrs({ viewBox: "0 0 72 72" })`
  width: 72px;
  height: 72px;
  border-radius: 50%;
  background: rgba(232, 232, 232, 0.8);
  fill: none;
  stroke: #606060;
  stroke-width: 3.4;
`;

const Axis = styled.div`
  height: 78px;
  flex: none;
  padding-left: 12px;
  margin-right: 12px;
  background: linear-gradient(90deg, #fff, #f8f8f8 35%);
`;

const AxisLabels = styled.div`
  display: grid;
  grid-template-columns: 214px 262px 263px 219px auto;
  margin-top: 8px;
  color: #888;
  font-size: 34.5px;
  font-weight: 450;
`;

const StartDate = styled.span`
  color: #606060;
`;

const FadedDate = styled.span`
  width: max-content;
  background: linear-gradient(90deg, #ccc, #888 60%);
  background-clip: text;
  color: transparent;
`;

const Dash = styled.span`
  display: inline-block;
  width: 19px;
  font-family: Inter, sans-serif;
  font-size: 36px;
  line-height: 0;
  text-align: center;
`;

const Panel = styled.section`
  position: relative;
  flex: none;
  margin: 0 12px;
  border: 2px solid #ececec;
  border-width: 2px 1px 1px;
`;

const VolumePanel = styled(Panel)`
  height: 258px;
`;

const DetectorPanel = styled(Panel)`
  height: 245px;
  margin-bottom: 7px;
`;

const PanelSvg = styled.svg`
  position: absolute;
  top: -2px;
  left: -1px;
`;

const PanelHead = styled.div<{ $top: number }>`
  position: relative;
  display: flex;
  align-items: center;
  padding: ${({ $top }) => $top}px 0 0 11px;
`;

const Metric = styled.span<{ $color: string; $width?: number; $left?: number }>`
  width: ${({ $width }) => ($width ? `${$width}px` : "auto")};
  margin-left: ${({ $left = 0 }) => $left}px;
  color: ${({ $color }) => $color};
  font-size: 36.5px;
  letter-spacing: -1.3px;
`;

const Blank = styled.span<{ $color?: string }>`
  color: ${({ $color = "inherit" }) => $color};
  font-family: Inter, sans-serif;
  font-size: 40px;
  line-height: 0;
  letter-spacing: 2.5px;
`;

const HelpSlot = styled.span`
  display: flex;
  width: 62px;
  padding-left: 9px;
`;

const Signal = styled.span<{ $color: string }>`
  width: 122.6px;
  margin-top: -9px;
  color: ${({ $color }) => $color};
  font-size: 35.5px;
`;

const Promo = styled.div`
  position: absolute;
  top: 0;
  right: -1px;
  display: flex;
  flex-direction: column;
  align-items: center;
  width: 289px;
  height: 243px;
  padding: 26px 2px 0 0;
  background: radial-gradient(circle at 12% 35%, #f6eaed, transparent 45%),
    radial-gradient(circle at 20% 75%, #eaf0f1, transparent 50%), #f5f4f6;
`;

const PromoTitle = styled.strong`
  margin-top: 19px;
  color: #222;
  font-size: 35.8px;
  font-weight: 400;
`;

const PromoNote = styled.span`
  display: flex;
  align-items: center;
  margin-top: 17px;
  color: #666;
  font-size: 29.5px;

  span {
    margin-left: 10px;
    font-size: 18px;
  }
`;

const AiText = styled.text`
  fill: #ff9d0a;
  font-size: 21px;
  font-weight: 700;
`;

const TipBubble = styled.div`
  position: absolute;
  right: 1px;
  bottom: 1px;
  width: 90px;
  height: 90px;
  border-radius: 50%;
  background: rgba(88, 184, 255, 0.88);
`;

const NewsTabs = styled.nav`
  display: flex;
  align-items: center;
  height: 121px;
  flex: none;
  padding-left: 40px;
  overflow: hidden;
  border-bottom: 2px solid #ccc;
`;

const NewsTab = styled.span<{ $width: number; $active?: boolean; $faded?: boolean }>`
  position: relative;
  display: flex;
  align-items: center;
  gap: 3px;
  flex: none;
  width: ${({ $width }) => $width}px;
  height: 100%;
  padding-top: 5px;
  color: ${({ $active }) => ($active ? COLOR.text : COLOR.gray)};
  font-size: ${({ $active }) => ($active ? 49 : 44.5)}px;
  font-weight: ${({ $active }) => ($active ? 700 : 400)};
  mask-image: ${({ $faded }) => ($faded ? "linear-gradient(90deg, #000, transparent 75%)" : "none")};

  &::after {
    content: "";
    display: ${({ $active }) => ($active ? "block" : "none")};
    position: absolute;
    left: 20px;
    bottom: 0;
    width: 60px;
    height: 12px;
    border-radius: 6px;
    background: #fa3c32;
  }
`;

const Marked = styled.span`
  position: relative;
`;

const NewsBody = styled.main`
  flex: 1;
`;

const BottomBar = styled.footer`
  display: grid;
  grid-template-columns: repeat(3, 360px);
  height: 153px;
  flex: none;
  background: #252525;
`;

const Action = styled.div`
  display: flex;
  flex-direction: column;
  align-items: center;
  gap: 15px;
  padding-top: 26px;
  color: #ddd;
  font-size: 35.5px;
`;

const BuyIcon = styled.span`
  display: flex;
  align-items: center;
  justify-content: center;
  width: 50px;
  height: 50px;
  border: 3px solid #e5323e;
  border-radius: 7px;
  color: #ff2d46;
  font-size: 28px;
  font-weight: 700;
`;

export default App;
